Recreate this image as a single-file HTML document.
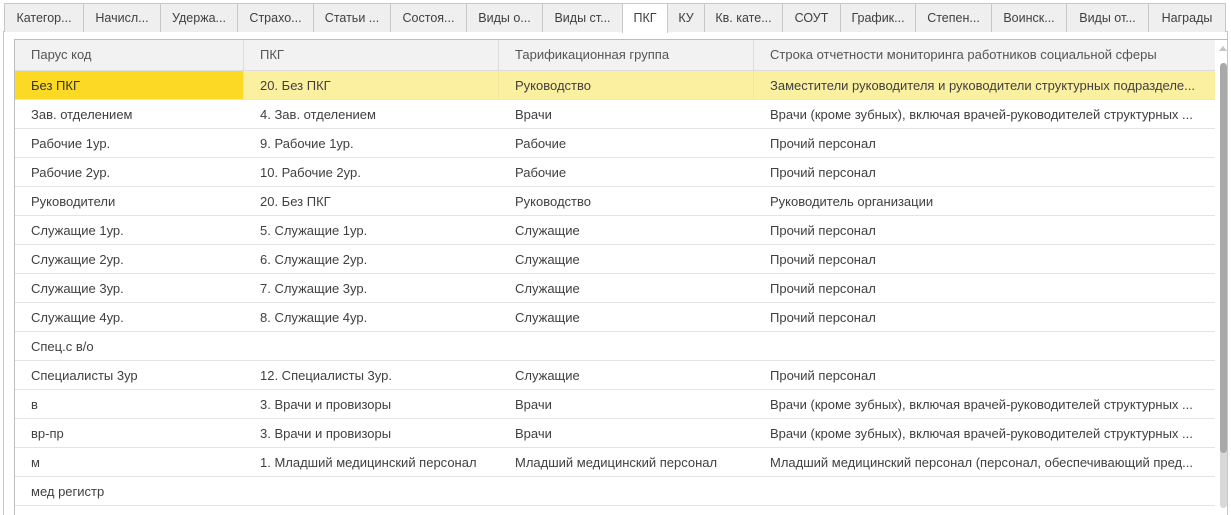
<!DOCTYPE html>
<html style="overflow:hidden;width:1231px;height:515px"><head><meta charset="utf-8"><style>
*{box-sizing:border-box;margin:0;padding:0}
body{width:1231px;height:515px;background:#fff;font-family:"Liberation Sans",Arial,sans-serif;font-size:13px;color:#404040;position:relative;overflow:hidden}
.tab{position:absolute;top:3px;height:29px;border:1px solid #c8c8c8;border-bottom:none;background:#efefef;color:#404040;text-align:center;line-height:28px;font-size:12.5px;white-space:nowrap}
.tab.act{background:#fff;height:30px;z-index:2}
.panel{position:absolute;left:3px;top:31px;width:1225px;height:484px;border:1px solid #c8c8c8;border-bottom:none}
.tbl{position:absolute;left:14px;top:39px;width:1214px;height:476px;border-left:1px solid #bdbdbd;border-top:1px solid #bdbdbd}
.hdr{position:absolute;left:0;top:0;width:1200px;height:31px;background:#f2f2f2;border-bottom:1px solid #dcdcdc;color:#555}
.hdr .c{line-height:29px}
.row{position:absolute;left:0;width:1200px;height:29px;border-bottom:1px solid #e4e4e4}
.c{position:absolute;top:0;height:100%;line-height:29px;padding-left:16px;white-space:nowrap;overflow:hidden}
.hdr .c{border-right:1px solid #dcdcdc}
.c1{left:0;width:229px}.c2{left:229px;width:255px}.c3{left:484px;width:255px}.c4{left:739px;width:461px}
.sel{background:#fbf0a0}.sel .c1{background:#fbd925}.sel .c{border-right:1px solid #f3e6a0}
.sb{position:absolute;left:1202px;top:0;width:12px;height:470px}
.thumb{position:absolute;left:3px;top:23px;width:7px;height:390px;background:#a9a9a9;border-radius:4px}
.track{position:absolute;left:3px;top:23px;width:7px;height:445px;background:#d8d8d8;border-radius:4px}
.up{position:absolute;left:2px;top:6px;width:0;height:0;border-left:4px solid transparent;border-right:4px solid transparent;border-bottom:5px solid #c4c4c4}
</style></head><body>
<div class="panel"></div>
<div class="tab" style="left:4px;width:80px">Категор...</div>
<div class="tab" style="left:83px;width:78px">Начисл...</div>
<div class="tab" style="left:160px;width:78px">Удержа...</div>
<div class="tab" style="left:237px;width:77px">Страхо...</div>
<div class="tab" style="left:313px;width:78px">Статьи ...</div>
<div class="tab" style="left:390px;width:77px">Состоя...</div>
<div class="tab" style="left:466px;width:77px">Виды о...</div>
<div class="tab" style="left:542px;width:81px">Виды ст...</div>
<div class="tab act" style="left:622px;width:46px">ПКГ</div>
<div class="tab" style="left:667px;width:38px">КУ</div>
<div class="tab" style="left:704px;width:79px">Кв. кате...</div>
<div class="tab" style="left:782px;width:59px">СОУТ</div>
<div class="tab" style="left:840px;width:76px">График...</div>
<div class="tab" style="left:915px;width:77px">Степен...</div>
<div class="tab" style="left:991px;width:76px">Воинск...</div>
<div class="tab" style="left:1066px;width:83px">Виды от...</div>
<div class="tab" style="left:1148px;width:78px">Награды</div>
<div class="tbl">
<div class="hdr"><div class="c c1">Парус код</div><div class="c c2">ПКГ</div><div class="c c3">Тарификационная группа</div><div class="c c4" style="border-right:none">Строка отчетности мониторинга работников социальной сферы</div></div>
<div class="row sel" style="top:31px"><div class="c c1" style="color:#333">Без ПКГ</div><div class="c c2">20. Без ПКГ</div><div class="c c3">Руководство</div><div class="c c4" style="border-right:none">Заместители руководителя и руководители структурных подразделе...</div></div>
<div class="row" style="top:60px"><div class="c c1">Зав. отделением</div><div class="c c2">4. Зав. отделением</div><div class="c c3">Врачи</div><div class="c c4">Врачи (кроме зубных), включая врачей-руководителей структурных ...</div></div>
<div class="row" style="top:89px"><div class="c c1">Рабочие 1ур.</div><div class="c c2">9. Рабочие 1ур.</div><div class="c c3">Рабочие</div><div class="c c4">Прочий персонал</div></div>
<div class="row" style="top:118px"><div class="c c1">Рабочие 2ур.</div><div class="c c2">10. Рабочие 2ур.</div><div class="c c3">Рабочие</div><div class="c c4">Прочий персонал</div></div>
<div class="row" style="top:147px"><div class="c c1">Руководители</div><div class="c c2">20. Без ПКГ</div><div class="c c3">Руководство</div><div class="c c4">Руководитель организации</div></div>
<div class="row" style="top:176px"><div class="c c1">Служащие 1ур.</div><div class="c c2">5. Служащие 1ур.</div><div class="c c3">Служащие</div><div class="c c4">Прочий персонал</div></div>
<div class="row" style="top:205px"><div class="c c1">Служащие 2ур.</div><div class="c c2">6. Служащие 2ур.</div><div class="c c3">Служащие</div><div class="c c4">Прочий персонал</div></div>
<div class="row" style="top:234px"><div class="c c1">Служащие 3ур.</div><div class="c c2">7. Служащие 3ур.</div><div class="c c3">Служащие</div><div class="c c4">Прочий персонал</div></div>
<div class="row" style="top:263px"><div class="c c1">Служащие 4ур.</div><div class="c c2">8. Служащие 4ур.</div><div class="c c3">Служащие</div><div class="c c4">Прочий персонал</div></div>
<div class="row" style="top:292px"><div class="c c1">Спец.с в/о</div></div>
<div class="row" style="top:321px"><div class="c c1">Специалисты 3ур</div><div class="c c2">12. Специалисты 3ур.</div><div class="c c3">Служащие</div><div class="c c4">Прочий персонал</div></div>
<div class="row" style="top:350px"><div class="c c1">в</div><div class="c c2">3. Врачи и провизоры</div><div class="c c3">Врачи</div><div class="c c4">Врачи (кроме зубных), включая врачей-руководителей структурных ...</div></div>
<div class="row" style="top:379px"><div class="c c1">вр-пр</div><div class="c c2">3. Врачи и провизоры</div><div class="c c3">Врачи</div><div class="c c4">Врачи (кроме зубных), включая врачей-руководителей структурных ...</div></div>
<div class="row" style="top:408px"><div class="c c1">м</div><div class="c c2">1. Младший медицинский персонал</div><div class="c c3">Младший медицинский персонал</div><div class="c c4">Младший медицинский персонал (персонал, обеспечивающий пред...</div></div>
<div class="row" style="top:437px"><div class="c c1">мед регистр</div></div>
<div class="sb"><div class="up"></div><div class="track"></div><div class="thumb"></div></div>
</div>
</body></html>
